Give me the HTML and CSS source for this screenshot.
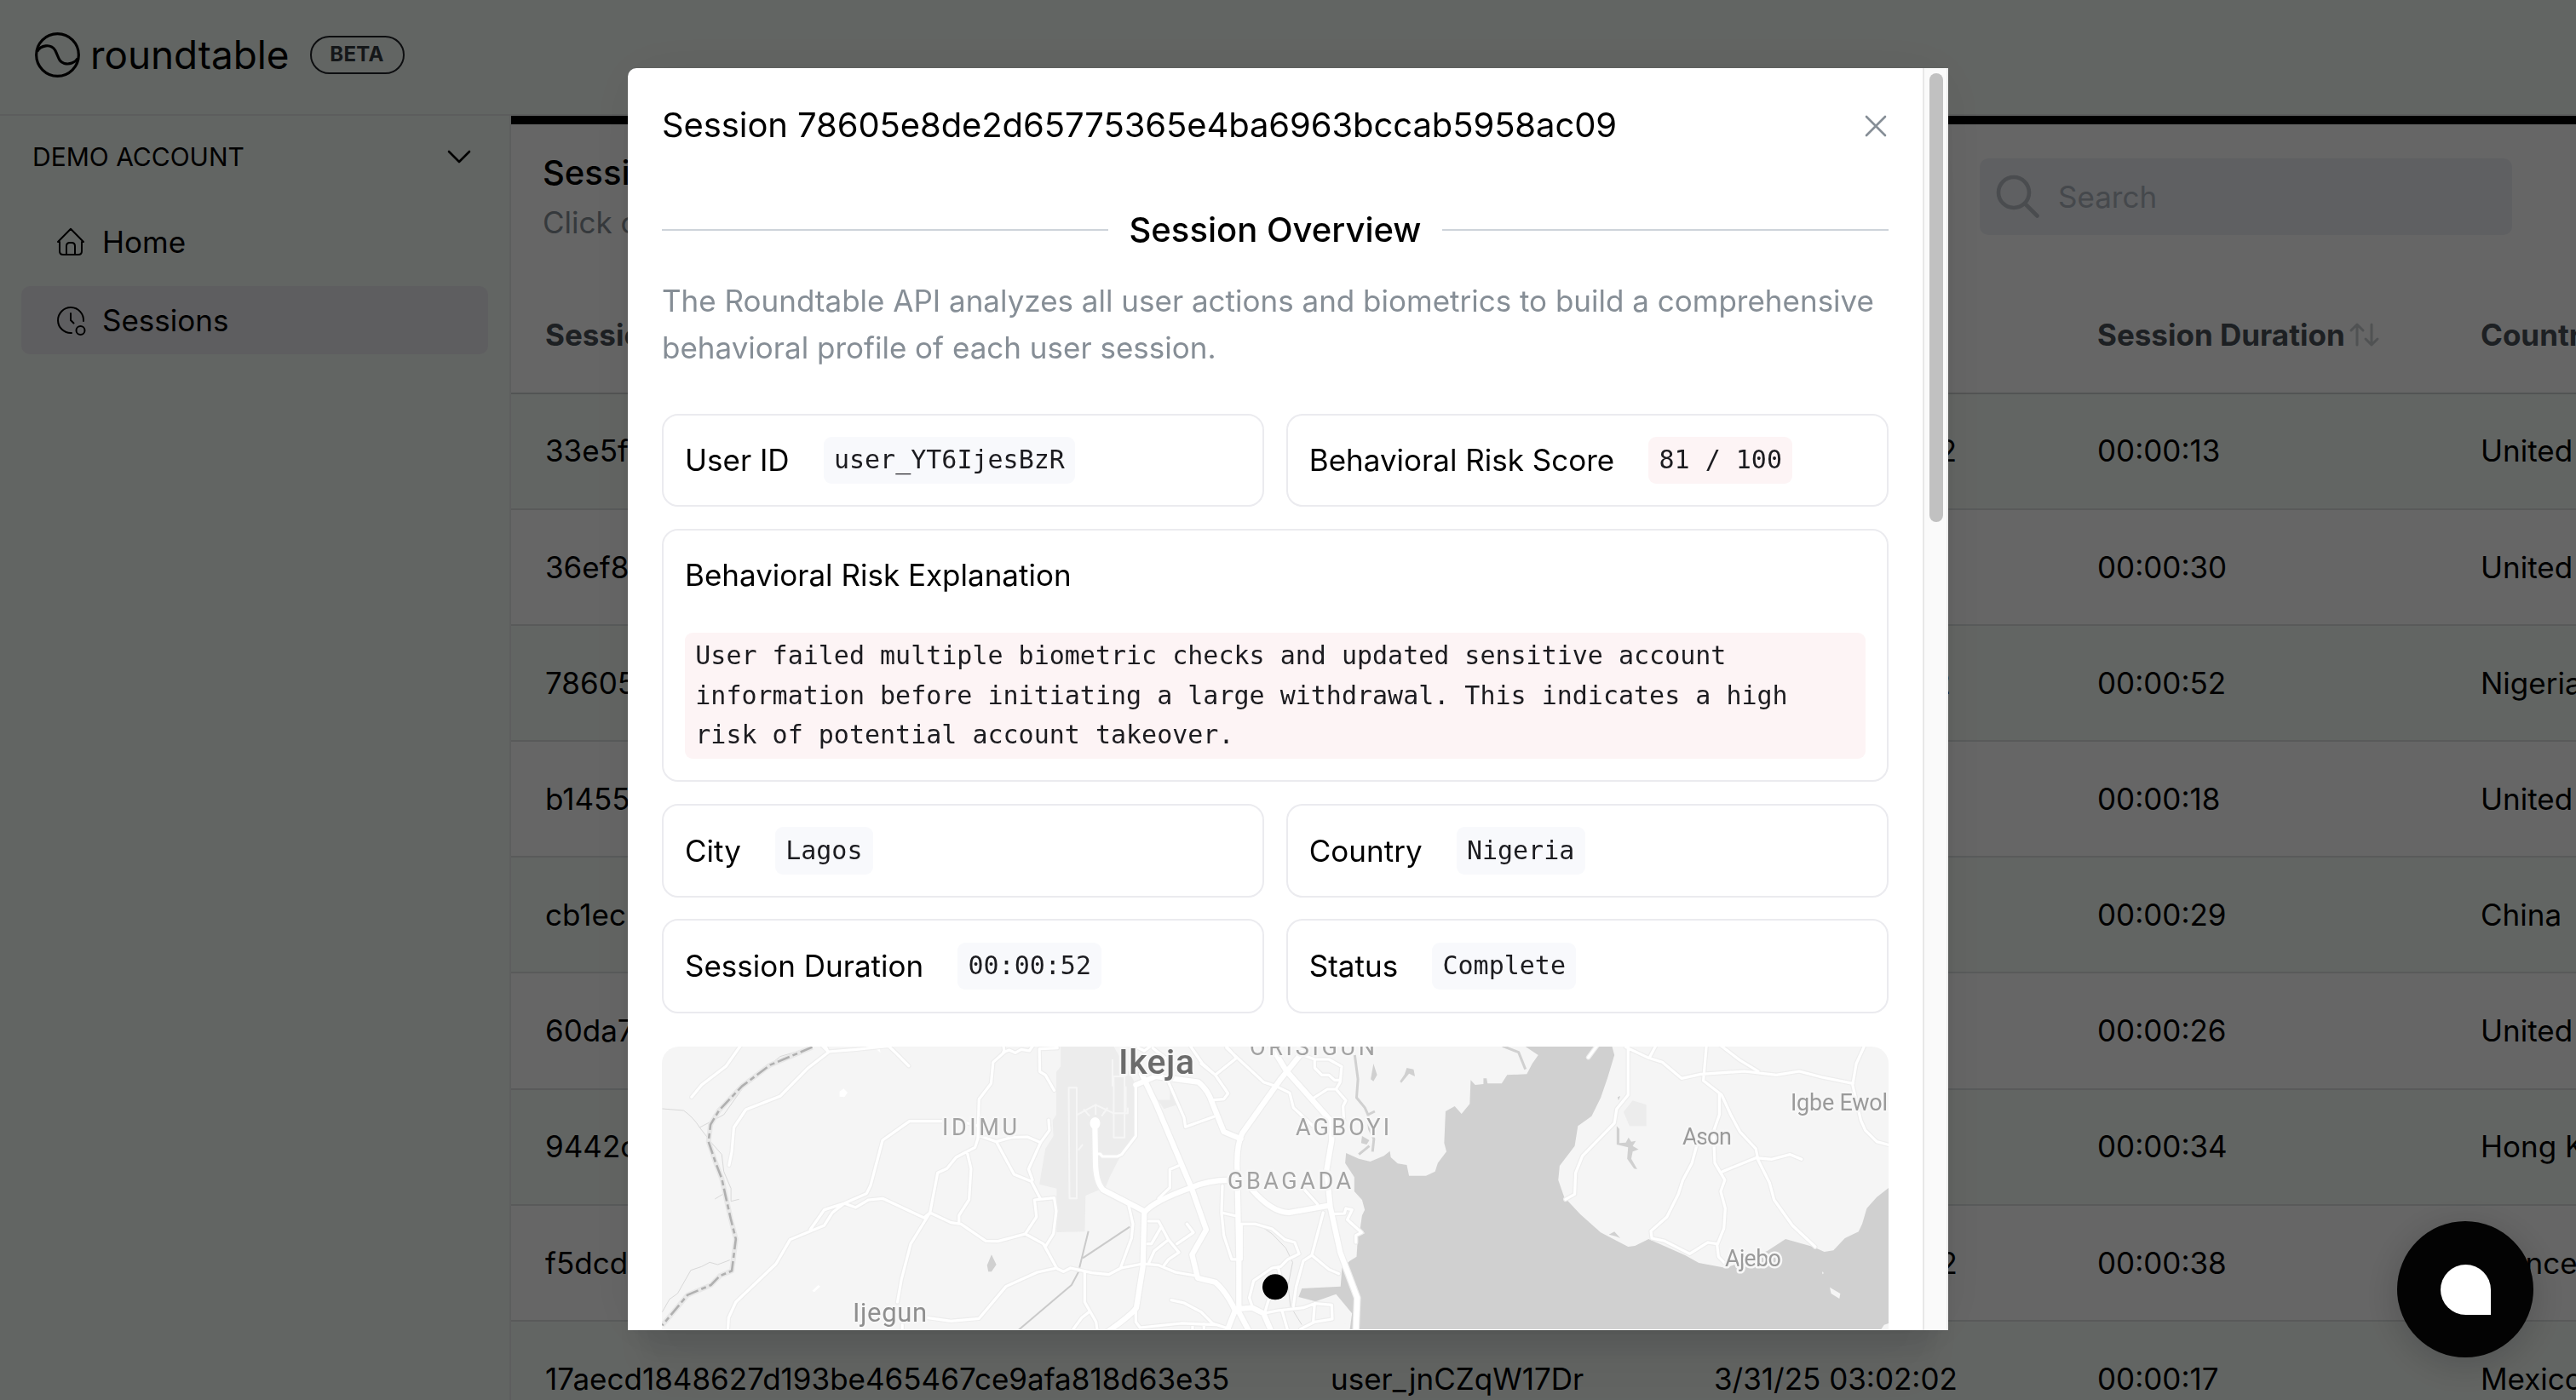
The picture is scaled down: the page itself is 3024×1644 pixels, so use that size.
FILE: index.html
```html
<!DOCTYPE html>
<html lang="en">
<head>
<meta charset="utf-8">
<title>Roundtable – Sessions</title>
<link rel="stylesheet" href="styles.css">
</head>
<body>
<div class="app">
  <header class="topbar">
    <svg class="logo" viewBox="0 0 160 160" fill="none" stroke="#000" stroke-width="9.5">
      <circle cx="80" cy="80" r="75"/>
      <path d="M8 68C20 46 56 38 72 64C84 88 84 104 104 110C122 115 142 108 152 92"/>
    </svg>
    <span class="brand">roundtable</span>
    <span class="beta">BETA</span>
  </header>
  <div class="body">
    <nav class="sidebar">
      <div class="account">
        <span>DEMO ACCOUNT</span>
        <svg width="28" height="16" viewBox="0 0 28 16" fill="none" stroke="#000" stroke-width="2.6" stroke-linecap="round" stroke-linejoin="round"><path d="M2 2L14 14L26 2"/></svg>
      </div>
      <a class="nav-item">
        <svg width="36" height="36" viewBox="0 0 36 36" fill="none" stroke="#000" stroke-width="2" stroke-linecap="round" stroke-linejoin="round"><path d="M5 18H3L18 2.800L33 18H31M5 18V29Q5 33 9 33H27Q31 33 31 29V18M13 33V23Q13 19 17 19H19Q23 19 23 23V33"/></svg>
        <span>Home</span>
      </a>
      <a class="nav-item active">
        <svg width="36" height="36" viewBox="0 0 36 36" fill="none" stroke="#000" stroke-width="2" stroke-linecap="round" stroke-linejoin="round"><path d="M33 19A15 15 0 1 0 19 33M18 10V18L21.500 21.500"/><circle cx="29.500" cy="30" r="5"/></svg>
        <span>Sessions</span>
      </a>
    </nav>
    <main class="content">
      <div class="toolbar">
        <div class="heading">
          <h1>Sessions</h1>
          <p>Click on a session to view details</p>
        </div>
        <div class="search">
          <svg width="52" height="52" viewBox="0 0 52 52" fill="none" stroke="#b8bec5" stroke-width="4.600" stroke-linecap="round"><circle cx="21" cy="21" r="18"/><path d="M34 34L48.500 48.500"/></svg>
          <span>Search</span>
        </div>
      </div>
      <div class="table">
        <div class="row head">
          <span>Session ID</span><span></span><span></span>
          <span>Session Duration<svg width="38" height="30" viewBox="0 0 38 30" fill="none" stroke="#c9ccd0" stroke-width="3" stroke-linecap="round" stroke-linejoin="round"><path d="M11 27V3M4 10L11 3L18 10M28 3V27M21 20L28 27L35 20"/></svg></span>
          <span>Country</span>
        </div>
        <div class="row"><span>33e5f</span><span></span><span>3/31/25 03:02:22</span><span>00:00:13</span><span>United States</span></div>
        <div class="row"><span>36ef8</span><span></span><span></span><span>00:00:30</span><span>United States</span></div>
        <div class="row"><span>78605</span><span></span><span>3/31/25 03:02:12</span><span>00:00:52</span><span>Nigeria</span></div>
        <div class="row"><span>b1455</span><span></span><span></span><span>00:00:18</span><span>United States</span></div>
        <div class="row"><span>cb1ec</span><span></span><span></span><span>00:00:29</span><span>China</span></div>
        <div class="row"><span>60da7</span><span></span><span></span><span>00:00:26</span><span>United States</span></div>
        <div class="row"><span>9442c</span><span></span><span></span><span>00:00:34</span><span>Hong Kong</span></div>
        <div class="row"><span>f5dcd</span><span></span><span>3/31/25 03:02:02</span><span>00:00:38</span><span>France</span></div>
        <div class="row"><span>17aecd1848627d193be465467ce9afa818d63e35</span><span>user_jnCZqW17Dr</span><span>3/31/25 03:02:02</span><span>00:00:17</span><span>Mexico</span></div>
      </div>
    </main>
  </div>
</div>

<div class="overlay"></div>

<section class="modal">
  <div class="modal-content">
    <div class="modal-head">
      <h2>Session 78605e8de2d65775365e4ba6963bccab5958ac09</h2>
      <svg width="30" height="30" viewBox="0 0 30 30" fill="none" stroke="#868e96" stroke-width="2.600" stroke-linecap="round"><path d="M4 4L26 26M26 4L4 26"/></svg>
    </div>
    <div class="divider"><span>Session Overview</span></div>
    <p class="intro">The Roundtable API analyzes all user actions and biometrics to build a comprehensive behavioral profile of each user session.</p>
    <div class="cards">
      <div class="card"><span>User ID</span><code>user_YT6IjesBzR</code></div>
      <div class="card"><span>Behavioral Risk Score</span><code class="risk">81 / 100</code></div>
      <div class="card wide"><span>Behavioral Risk Explanation</span><code class="risk">User failed multiple biometric checks and updated sensitive account information before initiating a large withdrawal. This indicates a high risk of potential account takeover.</code></div>
      <div class="card"><span>City</span><code>Lagos</code></div>
      <div class="card"><span>Country</span><code>Nigeria</code></div>
      <div class="card"><span>Session Duration</span><code>00:00:52</code></div>
      <div class="card"><span>Status</span><code>Complete</code></div>
    </div>
    <svg class="map" viewBox="777 1230 1440 332">
      <defs>
        <g id="minor">
          <path transform="translate(760 1210) scale(.4719 .3333)" d="M235 50L195 130L135 195L110 238M440 50L450 80L400 135L330 235L245 282L215 345L210 430L203 478M430 50L450 78L520 70L600 58L620 85L650 128M885 50L888 80L860 115L855 190L825 245L822 385L815 415L768 450L745 490L722 505L703 645L655 755L632 880L622 960M634 1040V1060M885 80L900 72L915 82L930 70L950 75L960 55M1020 65L975 68L976 148L990 160L1012 214M735 323H652L585 390L555 550L545 578L490 612L440 635L405 705M200 1060L202 1015L220 960L320 825L355 740L440 690L460 645L490 612L518 627L550 600L585 595L688 663L703 645L755 680L780 685L842 745L872 746L940 720L968 660L963 600L1012 593L1017 640L1010 720L990 765M795 430L805 490L800 600L775 655V680M828 375L868 395L912 510L955 535L978 598M868 395L905 380L945 378L978 398L1000 355L998 318M978 398L948 492L958 530M780 323L822 340M940 720L985 755L1018 840L970 855L892 905L825 1018L755 1027L695 1015"/>
          <path transform="translate(1210 1225) scale(.3333)" d="M370 150V330L320 395L305 402H252L245 393H230M485 140L540 265L545 298L645 262M520 435L490 448V512L450 550M345 575L360 640L355 690L318 790M95 798L115 808L140 795L215 812L275 818L318 795L395 780L450 785L510 810L580 822M190 810V915L230 985L235 1020M205 950L180 970L150 1010M370 940V985L385 1005L530 990L650 995M570 992V1020M610 992V1020M495 908L540 918L600 950L640 990L700 1010M415 630H450L485 695L522 740L485 765L470 785M460 650L425 710H412M485 695L435 735L415 780M550 640L573 670L515 710M675 505L672 600L680 680L708 765H742V640H790L850 657L895 695L930 705L945 745L905 765L880 790L850 795L785 840L770 900L780 930M672 600L725 612M872 795L880 830M600 75L650 115L725 55L685 10M560 10L605 75L650 115L695 180L680 200L645 203M690 20L820 140L865 155L912 178L925 230L1000 300M1000 60V90L1025 115H1050L1070 133H1088M960 45L1000 60H1050L1095 85L1090 140L1075 165H1045L990 200M1075 165L1110 205L1100 225L1103 280M965 520L1010 570M1060 605L1105 603L1110 585L1132 590L1115 625L1165 670L1145 680V705M1030 600L990 750L960 770L935 860L925 930M990 750L1050 800L1085 815M820 955L870 945L960 935L1000 920L1060 925L1062 975L1000 985L950 1010M1000 920L995 985M885 945L905 1015M840 900L825 950M370 15L400 30L420 15M430 20L480 60"/>
          <path transform="translate(1480 1210) scale(.5357 .3333)" d="M805 50V230L780 280L775 330L705 445L690 505L688 580L668 598M800 62L850 100L880 115L922 172L965 157L1060 147L1130 160L1180 147L1230 168L1298 190M868 50L852 98M977 50L970 180L1010 230L1030 300L1050 360L1085 420L1090 460L1115 540L1125 600L1165 690L1215 765M1003 50L1050 108L1090 147M1325 50L1305 120L1297 195L1315 320L1325 355L1350 395L1380 408M1005 228V300L992 360L995 470L1017 530L1008 570L1018 630L1015 700L1000 760L1003 800L1015 820M955 410L945 470L925 530L915 580L890 660L855 710L857 735L885 745L940 790L980 750L1000 755M1012 500L1085 452L1120 457L1160 440L1185 457M718 98L740 50"/>
        </g>
        <g id="major" transform="translate(1210 1225) scale(.3333)">
          <path d="M390 110L440 215L565 510L618 660L568 748L588 830L650 845Q690 880 720 945L690 1020M226 290L228 420Q228 490 255 520L400 595L395 790L372 935Q355 960 270 1020M400 600Q430 560 565 512Q640 480 727 487M965 25L880 130L745 320Q725 360 727 440L733 760V950L770 1020M845 10L900 100L1060 280L1060 345L1042 450L1055 580L1090 740L1150 900L1145 1020M780 520Q850 600 910 600L1050 575M370 150L440 120L590 140Q615 160 630 190L680 315L740 340M720 940L780 935L820 955L848 1020"/>
        </g>
      </defs>
      <rect class="land" x="777" y="1230" width="1440" height="334"/>
      <g transform="translate(760 1210) scale(.4719 .3333)">
        <path class="zone" d="M1028 60H1160L1210 180L1212 380L1175 450L1150 520L1140 555L1090 585L1088 712L1018 714L1018 560L975 545L990 420L1010 375L1008 320L1017 300V150L1028 130ZM1270 248H1300V215L1318 265L1285 280Z"/>
        <path class="runway" d="M1048 205H1068V595H1050ZM1157 105V200M1160 165H1187V380H1160ZM1070 300L1115 265L1160 295H1195V275M1085 280L1100 305M1115 265V300M1145 275L1130 305M1190 200V290M1083 405L1072 425"/>
        <path class="water" d="M856 793L868 828L856 853H848L845 830Z"/>
        <path class="stream" d="M37 279L90 285Q115 310 130 345L160 400L185 440L190 500L208 560V605M130 345L190 300L240 200L330 95L410 62M168 597L190 578M208 605L228 598M37 995L55 950L75 930L108 848L135 835L155 820L175 828L205 812"/>
        <path class="boundary-case" d="M410 62L305 125L235 200L178 285L157 335L152 395L170 470L185 525L195 590L207 665L220 738L210 850L180 868L158 900L100 935L37 1042"/>
        <path class="boundary" d="M410 62L305 125L235 200L178 285L157 335L152 395L170 470L185 525L195 590L207 665L220 738L210 850L180 868L158 900L100 935L37 1042"/>
        <path class="rail" d="M922 1060L1055 900L1072 855L1097 710M1083 805L1200 695"/>
        <path class="islet" d="M478 218L488 208L498 222L490 238L478 236ZM410 920L425 900L430 905L415 925ZM570 70L578 68L580 82Z"/>
      </g>
      <g transform="translate(1480 1210) scale(.5357 .3333)">
        <path class="water" d="M580 60L608 90L595 120L583 157L540 160L528 190L497 190L495 172H488V192L470 195L460 178L458 262L440 297L425 270L405 288L402 400L407 430L388 470L382 500L362 515H325L320 477L300 472L285 450L283 428L270 445L240 465L215 455L187 435L185 470L205 520V570L222 600L228 635L222 655L218 700L228 718L213 725L210 800L195 815L178 840L175 905L90 912L83 942L120 958L165 932L200 1000L195 1060H1380V553L1350 590L1328 630L1318 685L1310 712L1280 735L1255 778L1235 783L1210 765L1150 738L1110 780L1020 840L960 822L930 795L850 738L820 762L805 765L745 715L700 650L665 590L652 530L655 480L688 410L695 340L725 305L745 240L760 170L775 90L770 60Z"/>
        <path class="water" d="M247 120L255 160L247 182L241 175ZM320 135L335 140L338 165L325 155L308 188L305 182L315 158ZM763 722L775 712L788 735L778 728ZM222 375L238 390L232 405L220 400ZM780 340L786 350V400L800 398L806 380L812 395L822 392L815 410L828 422L815 430L812 455L825 492L818 490L803 455L805 415L780 405ZM782 238L788 234L784 250Z"/>
        <path class="creek" d="M206 90L213 175L210 240L228 275L235 300L250 288M235 300L238 350L248 385L245 430M530 58L565 80L580 140M238 410L215 440"/>
        <path class="zone" d="M795 290L815 250L845 265V340H808Z"/>
        <path class="land" d="M1247 908L1270 930L1268 948L1250 930ZM1380 1033L1366 1040L1358 1060H1380ZM1230 852L1234 858L1231 862ZM176 1015L185 978L200 1005L183 1040Z"/>
        <path class="stream" d="M0 692L25 720L55 770L70 820L60 900L65 975L90 1040"/>
      </g>
      <use href="#minor" class="minor case"/>
      <use href="#major" class="major case"/>
      <use href="#minor" class="minor"/>
      <use href="#major" class="major"/>
      <ellipse cx="1285.500" cy="1320" rx="6" ry="7" fill="#fff"/>
      <g class="labels">
        <text class="city" x="1313" y="1262" textLength="89">Ikeja</text>
        <text x="1106" y="1334" textLength="88">IDIMU</text>
        <text x="1467" y="1239.500" textLength="147">ORISIGUN</text>
        <text x="1521" y="1333.500" textLength="110">AGBOYI</text>
        <text x="1441" y="1397" textLength="145">GBAGADA</text>
        <text class="town" x="1001" y="1552.500" textLength="87">Ijegun</text>
        <text class="village" x="1975" y="1345" textLength="58">Ason</text>
        <text class="village" x="2025" y="1488" textLength="66">Ajebo</text>
        <text class="village" x="2102" y="1304.500" textLength="114">Igbe Ewol</text>
      </g>
      <circle cx="1497" cy="1512.300" r="15"/>
    </svg>
  </div>
  <div class="scrollbar"><div class="thumb"></div></div>
</section>

<div class="chat"><div class="bubble"></div></div>
</body>
</html>
```
FILE: styles.css
```css
* { box-sizing: border-box; }
body {
  margin: 0;
  width: 3024px;
  height: 1644px;
  overflow: hidden;
  font-family: Inter, "Liberation Sans", sans-serif;
  font-size: 35px;
  line-height: 54.560px;
  color: #000;
}
h1, h2, p { margin: 0; font-weight: 400; }
svg { flex: none; }
.app { height: 1644px; display: flex; flex-direction: column; background: #f6fcf8; overflow: hidden; }
.topbar {
  flex: none;
  height: 136px;
  padding: 0 41px 5px;
  display: flex;
  align-items: center;
  border-bottom: 2px solid #e6e9e8;
}
.logo { width: 53px; height: 53px; }
.brand { margin-left: 12px; font-size: 45.800px; line-height: 60px; }
.beta {
  margin-left: 24px;
  width: 111px;
  height: 45px;
  border: 2px solid #212529;
  border-radius: 23px;
  display: flex;
  align-items: center;
  justify-content: center;
  font-size: 24px;
  font-weight: 700;
  letter-spacing: .3px;
  color: #343a40;
}
.body { flex: 1; display: flex; min-height: 0; }
.sidebar { flex: none; width: 600px; border-right: 2px solid #e9ebec; padding: 0 25px; }
.account {
  height: 96px;
  padding: 0 20px 0 13px;
  display: flex;
  align-items: center;
  justify-content: space-between;
  font-size: 30px;
}
.nav-item {
  height: 80px;
  margin: 12px 0;
  padding-left: 40px;
  display: flex;
  align-items: center;
  gap: 19px;
  border-radius: 10px;
}
.nav-item.active { background: #ebebf0; }
.content { flex: none; width: 3000px; border-top: 10px solid #000; background: #fff; }
.toolbar { height: 180px; display: flex; }
.heading { width: 1724px; padding: 26px 0 0 37px; }
.heading h1 { font-size: 40px; font-weight: 500; line-height: 62px; }
.heading p { color: #868e96; line-height: 55px; }
.search {
  width: 625px;
  height: 90px;
  margin-top: 40px;
  padding-left: 19px;
  display: flex;
  align-items: center;
  gap: 21px;
  border-radius: 10px;
  background: #eef0f5;
  color: #adb5bd;
}
.row {
  display: grid;
  grid-template-columns: 922px 450px 450px 450px 650px;
  height: 136.2px;
  align-items: center;
  padding-left: 40px;
  border-bottom: 2px solid #dee2e2;
  white-space: nowrap;
}
.row:nth-child(even) { background: #f6fcf8; }
.row.head {
  height: 136.500px;
  font-weight: 700;
  color: #495057;
  border-color: #ced1d2;
}
.row.head span { display: flex; align-items: center; }
.row.head svg { margin-left: 3px; }
.overlay { position: fixed; inset: 0; background: rgba(0, 0, 0, .6); }
.modal {
  position: fixed;
  left: 737px;
  top: 80px;
  width: 1550px;
  height: 1482px;
  display: flex;
  border-radius: 10px 0 0 0;
  background: #fff;
  overflow: hidden;
  box-shadow: 0 2px 6px rgba(0, 0, 0, .05), 0 72px 56px -14px rgba(0, 0, 0, .05), 0 34px 34px -14px rgba(0, 0, 0, .08), 0 0 70px rgba(0, 0, 0, .07);
}
.modal-content { width: 1520px; padding: 0 40px; overflow: hidden; }
.modal-head { height: 135px; display: flex; align-items: center; justify-content: space-between; }
.modal-head h2 { font-size: 40px; letter-spacing: -.09px; white-space: nowrap; }
.divider {
  margin-top: 24px;
  height: 62px;
  display: flex;
  align-items: center;
  gap: 25px;
  font-size: 40px;
  font-weight: 500;
}
.divider::before, .divider::after { content: ""; flex: 1; height: 2px; background: #ced4da; }
.intro { margin-top: 25px; color: #868e96; }
.cards {
  margin-top: 50.500px;
  display: grid;
  grid-template-columns: 1fr 1fr;
  grid-template-rows: 109.800px 297.200px 110.100px 110.100px;
  gap: 25.600px;
}
.card {
  border: 2px solid #ebebef;
  border-radius: 19px;
  padding: 0 25px;
  display: flex;
  align-items: center;
  gap: 40px;
}
.card.wide {
  grid-column: span 2;
  flex-direction: column;
  align-items: stretch;
  justify-content: center;
  gap: 40px;
}
code {
  padding: 4.600px 12.300px;
  border-radius: 9px;
  background: #f8f9fc;
  font-family: "DejaVu Sans Mono", monospace;
  font-size: 30px;
  line-height: 46.500px;
  color: #1c1c20;
}
code.risk { background: #fdf4f5; }
.map { display: block; margin-top: 39.500px; width: 1440px; height: 332px; border-radius: 20px 20px 0 0; }
.map path { vector-effect: non-scaling-stroke; stroke-linejoin: round; }
.land { fill: #f5f5f5; }
.water { fill: #d0d0d0; }
.zone { fill: #ececec; }
.islet { fill: #fff; }
.runway { fill: none; stroke: #f6f6f6; stroke-width: 2px; }
.stream { fill: none; stroke: #d8d8d8; stroke-width: 1px; }
.creek { fill: none; stroke: #d0d0d0; stroke-width: 3px; }
.rail { fill: none; stroke: #cacaca; stroke-width: 2px; }
.boundary-case { fill: none; stroke: #e8e8e8; stroke-width: 6px; }
.boundary { fill: none; stroke: #b0b0b0; stroke-width: 2.600px; stroke-dasharray: 15 4 6 4; }
.minor, .major { fill: none; stroke: #fff; stroke-linecap: round; }
.minor { stroke-width: 3.200px; }
.major { stroke-width: 6.200px; }
.case { stroke: #ededed; }
.minor.case { stroke-width: 5.600px; }
.major.case { stroke-width: 8.600px; }
.labels {
  font-family: Roboto, sans-serif;
  font-size: 27px;
  fill: #a2a2a2;
  stroke: #f7f7f7;
  stroke-width: 5px;
  stroke-linejoin: round;
  paint-order: stroke;
}
.labels .city { font-size: 41px; font-weight: 500; fill: #6b6b6b; }
.labels .town { font-size: 31px; fill: #8f8f8f; }
.labels .village { fill: #9a9a9a; }
.scrollbar {
  width: 30px;
  padding: 6px 4px 0 6px;
  background: #fafafa;
  border-left: 2px solid #e8e8e8;
  border-right: 2px solid #ededed;
}
.thumb { width: 16px; height: 527px; border-radius: 8px; background: #c1c1c1; }
.chat {
  position: fixed;
  left: 2814px;
  top: 1434px;
  width: 160px;
  height: 160px;
  border-radius: 50%;
  display: flex;
  align-items: center;
  justify-content: center;
  background: #030303;
  box-shadow: 0 8px 48px rgba(0, 0, 0, .2);
}
.bubble { width: 59px; height: 59px; border-radius: 50% 50% 0 50%; background: #fff; }
```
